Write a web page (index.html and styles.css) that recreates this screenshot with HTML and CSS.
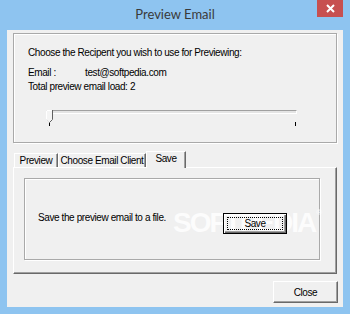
FILE: index.html
```html
<!DOCTYPE html>
<html>
<head>
<meta charset="utf-8">
<link rel="stylesheet" href="styles.css">
</head>
<body>
<div class="window">
  <div class="titlebar">
    <div class="title">Preview Email</div>
    <div class="close-x">
      <svg width="9" height="9" viewBox="0 0 9 9"><path d="M1 1L8 8M8 1L1 8" stroke="#fff" stroke-width="2"/></svg>
    </div>
  </div>
  <div class="client">
    <div class="group">
      <div class="line">Choose the Recipent you wish to use for Previewing:</div>
      <div class="info">
        <div class="line"><span class="label">Email :</span>test@softpedia.com</div>
        <div class="line">Total preview email load: 2</div>
      </div>
      <div class="slider">
        <div class="track"></div>
        <div class="thumb">
          <svg width="7" height="13" viewBox="0 0 7 13">
            <path d="M0.5 0.5H6.5V9.5L3.5 12.5L0.5 9.5Z" fill="#f4f4f4"/>
            <path d="M0.5 10V0.5H6" stroke="#fff" fill="none"/>
            <path d="M0.5 9.5L3.5 12.5" stroke="#e0e0e0" fill="none"/>
            <path d="M6.5 0V9.5L3.5 12.5" stroke="#606060" fill="none"/>
          </svg>
        </div>
        <div class="ticks"><span class="tick"></span><span class="tick"></span></div>
      </div>
    </div>
    <div class="tabs">
      <div class="tab tab-preview">Preview</div>
      <div class="tab tab-client">Choose Email Client</div>
      <div class="tab tab-save active">Save</div>
    </div>
    <div class="panel">
      <div class="inner-group">
        <div class="watermark">SOFTPEDIA<sup class="reg">®</sup></div>
        <div class="save-row">
          <span class="save-text">Save the preview email to a file.</span>
          <button class="btn btn-save"><span class="focus">Save</span></button>
        </div>
      </div>
    </div>
    <div class="footer">
      <button class="btn btn-close">Close</button>
    </div>
  </div>
</div>
</body>
</html>
```
FILE: styles.css
```css
html, body {
  margin: 0;
  padding: 0;
}

.window {
  width: 350px;
  height: 314px;
  box-sizing: border-box;
  background: #8ec4f0;
  padding: 0 7px 7px;
  display: flex;
  flex-direction: column;
  font-family: "Liberation Sans", Arial, sans-serif;
  font-size: 10px;
  letter-spacing: -0.4px;
  color: #000;
}

.titlebar {
  height: 30px;
  flex: none;
  display: grid;
  grid-template-columns: 1fr auto 1fr;
  align-items: start;
}

.title {
  grid-column: 2;
  font-family: Lato, "Noto Sans", sans-serif;
  font-size: 13px;
  letter-spacing: 0;
  color: #3a3a3a;
  line-height: 28px;
}

.close-x {
  grid-column: 3;
  justify-self: end;
  width: 26px;
  height: 17px;
  background: #c75050;
  display: flex;
  align-items: center;
  justify-content: center;
}

.close-x svg {
  display: block;
}

.client {
  flex: 1;
  background: #f0f0f0;
  padding: 3px 5px 0 6px;
  display: flex;
  flex-direction: column;
}

.group {
  width: 324px;
  height: 110px;
  box-sizing: border-box;
  border: 1px solid #a9a9a9;
  box-shadow: inset 1px 1px 0 #fff, 1px 1px 0 #fff;
  padding: 12px 14px 0;
}

.line {
  line-height: 14px;
  white-space: nowrap;
}

.info {
  margin-top: 6px;
}

.label {
  display: inline-block;
  width: 57px;
}

.slider {
  position: relative;
  margin-top: 16px;
  margin-left: 18px;
  width: 251px;
  height: 20px;
}

.track {
  margin-top: 2px;
  height: 4px;
  box-sizing: border-box;
  border-top: 1px solid #a0a0a0;
  border-left: 1px solid #a0a0a0;
  border-bottom: 1px solid #fff;
  border-right: 1px solid #fff;
  background: #e4e4e4;
}

.thumb {
  position: absolute;
  left: 0;
  top: 0;
}

.thumb svg {
  display: block;
}

.ticks {
  display: flex;
  justify-content: space-between;
  margin-top: 8px;
  padding: 0 1px 0 3px;
}

.tick {
  width: 1px;
  height: 4px;
  background: #000;
}

.tabs {
  display: flex;
  align-items: flex-end;
  margin-top: 8px;
  padding-left: 1px;
  height: 16px;
  position: relative;
  z-index: 1;
}

.tab {
  height: 14px;
  box-sizing: border-box;
  border-top: 1px solid #fff;
  border-left: 1px solid #fff;
  border-right: 1px solid #696969;
  box-shadow: inset -1px 0 0 #a0a0a0;
  padding-top: 1px;
  line-height: 12px;
  text-align: center;
  white-space: nowrap;
  background: #f0f0f0;
}

.tab-preview {
  width: 44px;
}

.tab-client {
  width: 88px;
}

.tab-save {
  width: 40px;
}

.tab.active {
  height: 17px;
  margin-bottom: -1px;
}

.panel {
  width: 324px;
  height: 107px;
  box-sizing: border-box;
  border-top: 1px solid #fff;
  border-left: 1px solid #fff;
  border-right: 1px solid #696969;
  border-bottom: 1px solid #696969;
  box-shadow: inset -1px -1px 0 #a0a0a0;
  padding: 10px 0 0 10px;
}

.inner-group {
  position: relative;
  width: 296px;
  height: 82px;
  box-sizing: border-box;
  border: 1px solid #a9a9a9;
  box-shadow: inset 1px 1px 0 #fff, 1px 1px 0 #fff;
  padding: 32px 32px 0 13px;
}

.save-row {
  display: flex;
  align-items: flex-start;
  position: relative;
}

.save-text {
  line-height: 14px;
  white-space: nowrap;
}

.btn {
  font-family: "Liberation Sans", Arial, sans-serif;
  font-size: 10px;
  letter-spacing: -0.4px;
  color: #000;
  background: #f0f0f0;
  margin: 0;
  padding: 0;
  box-sizing: border-box;
  border-top: 1px solid #fff;
  border-left: 1px solid #fff;
  border-right: 1px solid #696969;
  border-bottom: 1px solid #696969;
  box-shadow: inset -1px -1px 0 #a0a0a0;
}

.btn-save {
  margin-left: auto;
  margin-top: 2px;
  width: 64px;
  height: 21px;
  border: 1px solid #000;
  background: transparent;
  box-shadow: inset 1px 1px 0 #fff, inset -1px -1px 0 #696969, inset -2px -2px 0 #a0a0a0;
  padding: 3px;
  display: flex;
}

.focus {
  flex: 1;
  border: 1px dotted #000;
  display: flex;
  align-items: center;
  justify-content: center;
  line-height: 11px;
}

.footer {
  display: flex;
  justify-content: flex-end;
  margin-top: 7px;
}

.btn-close {
  width: 65px;
  height: 22px;
}

.watermark {
  position: absolute;
  left: 148px;
  top: 30px;
  font-family: "Liberation Sans", Arial, sans-serif;
  font-weight: bold;
  font-size: 28px;
  line-height: 1;
  letter-spacing: -2px;
  color: #fff;
  opacity: 0.8;
  white-space: nowrap;
}

.reg {
  font-size: 8px;
  letter-spacing: 0;
  vertical-align: top;
  margin-left: 1px;
}
```
